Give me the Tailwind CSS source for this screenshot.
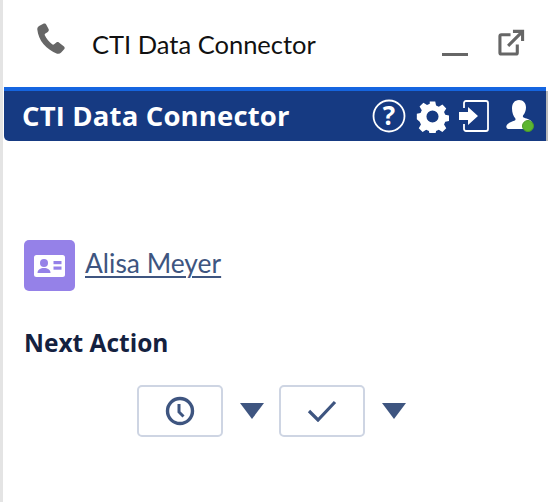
<!DOCTYPE html>
<html><head><meta charset="utf-8"><script src="https://cdn.jsdelivr.net/npm/@tailwindcss/browser@4"></script></head>
<body class="bg-white overflow-hidden">
<div class="w-[548px] h-[502px] flex bg-white font-['Lato',sans-serif]">
  <div class="w-[3px] mr-[1px] bg-[#e4e4e4] shrink-0"></div>
  <div class="w-[542px] flex flex-col">
    <div class="h-[87px] flex items-center">
      <svg class="ml-[30px] mb-[7px] w-[36px] h-[36px]" viewBox="0 0 24 24" fill="#666"><path d="M6.200 1.200 3.400 2.600c-.9.500-1.300 1.400-1.200 2.400.4 3.600 1.800 7 4.200 9.900 2.500 2.900 5.500 5 9 6.200 1 .3 2 0 2.700-.7l2-2.200c.5-.6.5-1.400-.1-1.900l-3.400-2.600c-.5-.4-1.200-.4-1.700 0l-1.500 1.200c-.4.300-.9.300-1.300 0-1.100-.9-2-1.800-2.900-2.900-.8-1-1.400-2-2-3.200-.2-.5 0-1 .4-1.200l1.600-1c.6-.4.800-1.100.6-1.700L8.200 1.900c-.3-.8-1.200-1.100-2-.7z"/></svg>
      <span class="ml-[22px] mt-[3px] text-[25.500px] leading-none text-[#111]">CTI Data Connector</span>
      <div class="ml-auto mr-[21px] flex items-center gap-[30px] mb-[1px]">
        <div class="w-[26px] h-[3px] bg-[#666] mt-[22px] -ml-[2px]"></div>
        <svg class="w-[27px] h-[27px] mb-[2px]" viewBox="0 0 28 28" fill="none" stroke="#666" stroke-width="3.200"><path d="M13 6H3.500a1.500 1.500 0 0 0-1.500 1.500v17a1.500 1.500 0 0 0 1.500 1.500h15a1.500 1.500 0 0 0 1.500-1.500V16"/><path d="M10.500 17.500 24.500 3.500M15.500 2.500h10v10"/></svg>
      </div>
    </div>
    <div class="h-[54px] bg-[#163a82] border-t-[4px] border-[#1565e0] rounded-bl-[5px] flex items-center">
      <span class="ml-[18px] text-[27.500px] leading-none font-bold text-white font-['Open_Sans',sans-serif] tracking-[0.150px]">CTI Data Connector</span>
      <div class="ml-auto flex items-center mr-[12px]">
        <svg class="w-[34px] h-[34px] overflow-visible" viewBox="0 0 34 34" fill="none"><circle cx="17" cy="17" r="15.500" stroke="#fff" stroke-width="1.800"/><text x="17" y="26" text-anchor="middle" fill="#fff" font-size="26" font-weight="700" font-family="Open Sans">?</text></svg>
        <svg class="ml-[10px] w-[33px] h-[33px]" viewBox="0 0 24 24" fill="#fff"><path fill-rule="evenodd" d="M10 1h4l.6 3 2 .9 2.600-1.600 2.800 2.800-1.600 2.600.9 2 2.700.6v4l-2.700.6-.9 2 1.600 2.600-2.800 2.800-2.600-1.600-2 .9-.6 2.900h-4l-.6-2.900-2-.9-2.600 1.600-2.800-2.800 1.600-2.600-.9-2L.6 14V10l2.700-.6.9-2-1.600-2.600 2.800-2.800 2.600 1.600 2-.9zM12 7.600a4.400 4.400 0 1 0 0 8.800 4.400 4.400 0 0 0 0-8.800z"/></svg>
        <svg class="ml-[9px] w-[32px] h-[34px]" viewBox="0 0 32 34" fill="none"><path d="M6 9V4a2 2 0 0 1 2-2h20a2 2 0 0 1 2 2v26a2 2 0 0 1-2 2H8a2 2 0 0 1-2-2v-5" stroke="#fff" stroke-width="1.800"/><path d="M1 13h9V8l10 9-10 9v-5H1z" fill="#fff"/></svg>
        <div class="relative ml-[16px] w-[28px] h-[34px]">
          <svg class="w-[28px] h-[34px]" viewBox="0 0 28 34" fill="#fff"><path d="M13 1c4.500 0 7 3.200 7 7.500 0 3.200-1.200 5.800-2.800 7.800-.8 1 0 2 1 2.500 3 1 7 2 7.800 4.500l.5 6.700H3c-1.600 0-3-1-2.600-3 .6-3 5-4.200 7.800-5.200 1.200-.5 1.700-1.500 1-2.500C7.500 17.300 6 13.500 6 9.500 6 4.500 8.500 1 13 1z"/></svg>
          <div class="absolute left-[16px] top-[21px] w-[12px] h-[12px] rounded-full bg-[#5cb531] border border-[#4a9a28]"></div>
        </div>
      </div>
    </div>
    <div class="px-[20px] pt-[99px] flex-1">
      <div class="flex items-center gap-[10px]">
        <div class="w-[51px] h-[51px] rounded-[5px] bg-[#9581e8] flex items-center justify-center">
          <svg class="w-[31px] h-[22px]" viewBox="0 0 31 22"><rect width="31" height="22" rx="2.500" fill="#fff"/><circle cx="10" cy="8" r="4" fill="#9581e8"/><path d="M3.500 18c0-3.500 3-5 6.500-5s6.500 1.500 6.500 5z" fill="#9581e8"/><rect x="19.500" y="6" width="8" height="3.200" fill="#9581e8"/><rect x="19.500" y="11.500" width="8" height="3.200" fill="#9581e8"/></svg>
        </div>
        <a class="text-[26.400px] leading-none text-[#3e5580] underline underline-offset-[3px] decoration-[2px] mb-[4px]">Alisa Meyer</a>
      </div>
      <div class="mt-[37px] text-[24.500px] leading-[30px] font-bold text-[#14213f] font-['Open_Sans',sans-serif]">Next Action</div>
      <div class="mt-[27px] ml-[113px] flex items-center">
        <button class="w-[86px] h-[52px] rounded-[5px] border-2 border-[#ced5e3] bg-white flex items-center justify-center">
          <svg class="w-[30px] h-[30px]" viewBox="0 0 30 30" fill="none" stroke="#3e5580"><circle cx="15" cy="15" r="12.500" stroke-width="3.400"/><path d="M14 8v8l4.500 4.500" stroke-width="3" /></svg>
        </button>
        <svg class="ml-[17px] w-[24px] h-[16px]" viewBox="0 0 24 16" fill="#3e5580"><path d="M0 0h24L12 16z"/></svg>
        <button class="ml-[15px] w-[86px] h-[52px] rounded-[5px] border-2 border-[#ced5e3] bg-white flex items-center justify-center">
          <svg class="w-[30px] h-[22px]" viewBox="0 0 30 22" fill="none" stroke="#3e5580" stroke-width="3.200"><path d="M2 11l9 9L28 2"/></svg>
        </button>
        <svg class="ml-[17px] w-[24px] h-[16px]" viewBox="0 0 24 16" fill="#3e5580"><path d="M0 0h24L12 16z"/></svg>
      </div>
    </div>
  </div>
  <div class="w-[2px] flex flex-col"><div class="h-[91px]"></div><div class="h-[50px] bg-[#bbb]"></div></div>
</div>
</body></html>
